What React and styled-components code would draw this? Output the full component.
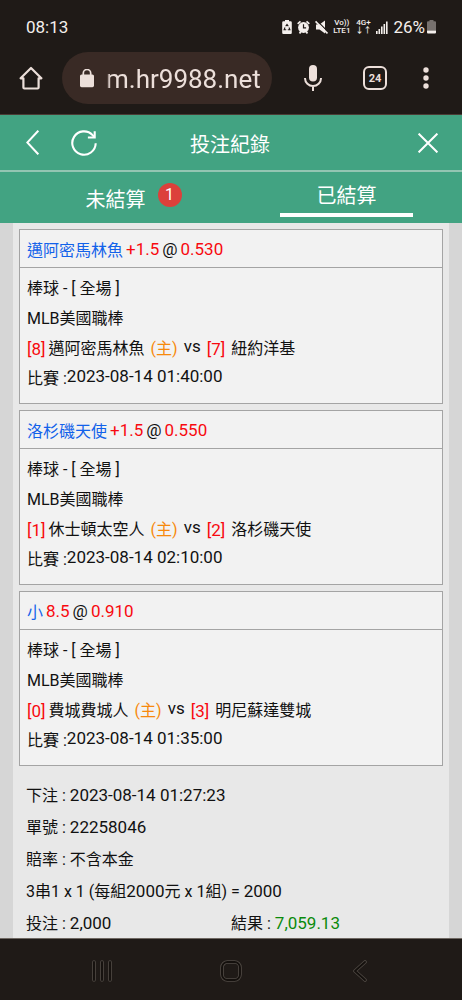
import { useState } from "react";
import styled, { createGlobalStyle } from "styled-components";

const GlobalStyle = createGlobalStyle`
  * {
    box-sizing: border-box;
  }
  body {
    margin: 0;
    font-family: Roboto, "Noto Sans CJK TC", sans-serif;
    font-size: 16px;
    color: #111;
    background: #1f1a17;
  }
  button, input {
    font-family: inherit;
    border: none;
    padding: 0;
    background: none;
    color: inherit;
  }
  button {
    cursor: pointer;
  }
  svg {
    display: block;
    flex-shrink: 0;
  }
`;

const Screen = styled.div`
  height: 100vh;
  display: flex;
  flex-direction: column;
`;

/* phone status bar */
const StatusBar = styled.div`
  height: 52px;
  padding: 2px 26px 0;
  display: flex;
  align-items: center;
  justify-content: space-between;
  color: #f4efec;
  font-size: 17px;
`;

const StatusIcons = styled.div`
  display: flex;
  align-items: center;
  gap: 5px;
`;

const NetLabel = styled.span`
  display: flex;
  flex-direction: column;
  align-items: center;
  font-size: 8px;
  line-height: 8px;
  font-weight: 500;
`;

const BatteryLevel = styled.span`
  display: flex;
  align-items: center;
  gap: 2px;
`;

/* browser bar */
const BrowserBar = styled.div`
  display: flex;
  align-items: center;
  padding: 0 6px 10px 0;
  color: #ecdfda;
  border-bottom: 1px solid #4a3c35;
`;

const BarButton = styled.button`
  width: ${(props) => props.$width}px;
  height: 52px;
  display: flex;
  align-items: center;
  justify-content: center;
`;

const AddressBox = styled.label`
  flex: 1;
  min-width: 0;
  height: 52px;
  padding: 0 8px 0 18px;
  display: flex;
  align-items: center;
  gap: 12px;
  border-radius: 26px;
  background: #392a25;
`;

const AddressInput = styled.input`
  flex: 1;
  min-width: 0;
  height: 40px;
  padding-top: 2px;
  font-size: 26px;
  outline: none;
  mask-image: linear-gradient(to right, transparent, #000 4px);
`;

const TabCount = styled.span`
  width: 24px;
  height: 24px;
  display: flex;
  align-items: center;
  justify-content: center;
  border: 2px solid #ecdfda;
  border-radius: 6px;
  font-size: 11px;
  font-weight: 700;
`;

/* app header */
const Header = styled.header`
  display: grid;
  grid-template-columns: 1fr auto 1fr;
  align-items: center;
  height: 57px;
  padding: 0 8px 0 6px;
  color: #fff;
  background: #42a382;
  border-bottom: 2px solid #93c5b2;
`;

const HeaderSide = styled.div`
  display: flex;
  justify-content: ${(props) => (props.$end ? "flex-end" : "flex-start")};
`;

const Title = styled.h1`
  margin: 0;
  padding-top: 4px;
  font-size: 20px;
  line-height: 30px;
  font-weight: 400;
`;

const Tabs = styled.nav`
  display: flex;
  background: #42a382;
`;

const Tab = styled.button`
  flex: 1;
  height: 51px;
  padding-top: ${(props) => (props.$active ? 2 : 4)}px;
  display: flex;
  flex-direction: column;
  align-items: center;
  justify-content: center;
  gap: 2px;
  color: #fff;
  font-size: 20px;
  line-height: 30px;

  &::after {
    content: "";
    display: ${(props) => (props.$active ? "block" : "none")};
    width: 58%;
    height: 4px;
    background: #fff;
  }
`;

const TabText = styled.span`
  position: relative;
`;

const Badge = styled.span`
  position: absolute;
  left: 100%;
  top: -2px;
  width: 24px;
  height: 24px;
  margin-left: 12px;
  border-radius: 50%;
  background: #dc403b;
  font-size: 16px;
  line-height: 24px;
  text-align: center;
`;

/* bet list */
const Content = styled.main`
  flex: 1;
  min-height: 0;
  overflow: hidden;
  padding: 0 13px;
  background: #d6d6d6;
`;

const Panel = styled.div`
  min-height: 100%;
  padding: 6px;
  background: #e8e8e8;
`;

const CardList = styled.div`
  display: flex;
  flex-direction: column;
  gap: 6px;
`;

const Card = styled.section`
  border: 1px solid #a4a4a4;
  background: #f2f2f2;
`;

const CardHead = styled.div`
  height: 38px;
  padding: 0 7px;
  display: flex;
  align-items: center;
  gap: 3px;
  border-bottom: 1px solid #a4a4a4;
`;

const CardBody = styled.div`
  padding: 6px 7px 9px;
`;

const Line = styled.div`
  display: flex;
  gap: ${(props) => props.$gap || 0}px;
  line-height: 30px;
  white-space: pre;
`;

const Pick = styled.span`
  color: #1262ea;
`;

const Num = styled.span`
  font-size: 17px;
  line-height: 20px;
  color: ${(props) => props.$color || "inherit"};
`;

const Seat = styled.span`
  display: flex;
  gap: ${(props) => props.$gap}px;
`;

const Red = styled.span`
  font-size: 17px;
  color: #f8090f;
`;

const HomeMark = styled.span`
  color: #f7890c;
`;

const Raised = styled.span`
  font-size: 17px;
  line-height: 24px;
`;

const Summary = styled.div`
  padding: 14px 7px 0;
`;

const SummaryRow = styled.div`
  display: grid;
  grid-template-columns: 1fr 1fr;
  height: 32px;
  line-height: 32px;
  white-space: nowrap;
`;

/* android navigation */
const NavBar = styled.nav`
  height: 62px;
  padding: 2px 38px 0;
  display: grid;
  grid-template-columns: repeat(3, 1fr);
  border-top: 1px solid #6f6862;
`;

const NavButton = styled.button`
  display: flex;
  align-items: center;
  justify-content: center;
`;

const PowerSaveIcon = () => (
  <svg width="10" height="14" viewBox="0 0 10 14">
    <path d="M3 0h4v1.3h1.6A1.2 1.2 0 0 1 9.8 2.5v10.2A1.2 1.2 0 0 1 8.6 14H1.4A1.2 1.2 0 0 1 .2 12.7V2.5A1.2 1.2 0 0 1 1.4 1.3H3z" fill="#f4efec" />
    <path d="M3.7 6.3 5 4.4l1.3 1.9M7 7.5l.9 2.3H5.8M4.2 9.8H2.1L3 7.5" fill="none" stroke="#1f1a17" strokeWidth="1.1" />
  </svg>
);

const AlarmIcon = () => (
  <svg width="13" height="14" viewBox="0 0 13 14">
    <circle cx="6.5" cy="7.5" r="5.4" fill="#f4efec" />
    <path d="M.7 3.8 3.5 1.3M12.3 3.8 9.5 1.3M2.6 13.4l1.2-1.9M10.4 13.400l-1.200-1.900" stroke="#f4efec" strokeWidth="1.8" />
    <path d="M6.5 4.3v3.5h2.6" fill="none" stroke="#1f1a17" strokeWidth="1.2" />
  </svg>
);

const MuteIcon = () => (
  <svg width="13" height="14" viewBox="0 0 13 14">
    <path d="M1 4.5h3.5L10 .6v12.800L4.500 9.500H1z" fill="#f4efec" />
    <path d="M1.6.4 13.300 12.100" stroke="#1f1a17" strokeWidth="1.3" />
    <path d="M.5 1.400 12.500 13.400" stroke="#f4efec" strokeWidth="1.700" />
  </svg>
);

const SignalIcon = () => (
  <svg width="12" height="13" viewBox="0 0 12 13" fill="#f4efec">
    <rect x="0" y="10" width="1.6" height="3" />
    <rect x="2.5" y="8" width="1.6" height="5" />
    <rect x="5" y="5.5" width="1.6" height="7.5" />
    <rect x="7.5" y="3" width="1.6" height="10" />
    <rect x="10" y="0.5" width="1.6" height="12.5" />
  </svg>
);

const BatteryIcon = () => (
  <svg width="9" height="14" viewBox="0 0 9 14">
    <path d="M2.5 0h4v1.3H8a1 1 0 0 1 1 1V10.500H0V2.300a1 1 0 0 1 1-1h1.500z" fill="#77716e" />
    <path d="M0 10.500h9v2a1 1 0 0 1-1 1H1a1 1 0 0 1-1-1z" fill="#f4efec" />
  </svg>
);

const HomeIcon = () => (
  <svg width="24" height="24" viewBox="0 0 24 24" fill="none" stroke="currentColor" strokeWidth="2.2" strokeLinejoin="round">
    <path d="M12 2 1.6 12.3h2.8V21.500a1 1 0 0 0 1 1h13.200a1 1 0 0 0 1-1v-9.200h2.800z" />
  </svg>
);

const LockIcon = () => (
  <svg width="14" height="19" viewBox="0 0 14 19">
    <rect x="0" y="5.5" width="14" height="12.7" rx="1.6" fill="currentColor" />
    <path d="M3.3 6.5V4.2a3.7 3.7 0 0 1 7.4 0v2.3" fill="none" stroke="currentColor" strokeWidth="1.7" />
  </svg>
);

const MicIcon = () => (
  <svg width="18" height="26" viewBox="0 0 18 26">
    <rect x="5" y="0" width="8" height="16.5" rx="4" fill="currentColor" />
    <path d="M1 13v.3a8 7.7 0 0 0 16 0V13M9 21v5" fill="none" stroke="currentColor" strokeWidth="2" />
  </svg>
);

const DotsIcon = () => (
  <svg width="6" height="22" viewBox="0 0 6 22" fill="currentColor">
    <circle cx="3" cy="3" r="2.7" />
    <circle cx="3" cy="11" r="2.7" />
    <circle cx="3" cy="19" r="2.7" />
  </svg>
);

const BackIcon = () => (
  <svg width="13" height="25" viewBox="0 0 13 25" fill="none" stroke="currentColor" strokeWidth="2">
    <path d="M12.3.7 1.3 12.5l11 11.8" />
  </svg>
);

const RefreshIcon = () => (
  <svg width="26" height="26" viewBox="0 0 26 26" fill="none" stroke="currentColor" strokeWidth="2.1">
    <path d="M24.700 13.300A11.700 11.700 0 1 1 21.600 5.100l1.700 1.900" />
    <path d="M23.700 1.300v6.200h-6.800" />
  </svg>
);

const CloseIcon = () => (
  <svg width="20" height="20" viewBox="0 0 20 20" stroke="currentColor" strokeWidth="2">
    <path d="M.6.6l18.800 18.800M19.400.6.6 19.400" />
  </svg>
);

// black glyph with a thin grey outline
const OutlinedPath = ({ d, width, height }) => (
  <svg width={width} height={height} viewBox={`0 0 ${width} ${height}`} fill="none" strokeLinecap="round" strokeLinejoin="round">
    <path d={d} stroke="#504a45" strokeWidth="3.6" />
    <path d={d} stroke="#14100d" strokeWidth="1.9" />
  </svg>
);

const bets = [
  {
    pick: "邁阿密馬林魚",
    line: "+1.5",
    odds: "0.530",
    home: { score: 8, name: "邁阿密馬林魚" },
    away: { score: 7, name: "紐約洋基" },
    time: "2023-08-14 01:40:00",
  },
  {
    pick: "洛杉磯天使",
    line: "+1.5",
    odds: "0.550",
    home: { score: 1, name: "休士頓太空人" },
    away: { score: 2, name: "洛杉磯天使" },
    time: "2023-08-14 02:10:00",
  },
  {
    pick: "小",
    line: "8.5",
    odds: "0.910",
    home: { score: 0, name: "費城費城人" },
    away: { score: 3, name: "明尼蘇達雙城" },
    time: "2023-08-14 01:35:00",
  },
];

const BetCard = ({ bet }) => (
  <Card>
    <CardHead>
      <Pick>{bet.pick}</Pick>
      <Num $color="#f8090f">{bet.line}</Num>
      <Num>@</Num>
      <Num $color="#f8090f">{bet.odds}</Num>
    </CardHead>
    <CardBody>
      <Line>棒球 - [ 全場 ]</Line>
      <Line>MLB美國職棒</Line>
      <Line $gap={6}>
        <Seat $gap={3}>
          <Red>[{bet.home.score}]</Red>
          <span>{bet.home.name}</span>
        </Seat>
        <HomeMark>(主)</HomeMark>
        <Raised>vs</Raised>
        <Seat $gap={6}>
          <Red>[{bet.away.score}]</Red>
          <span>{bet.away.name}</span>
        </Seat>
      </Line>
      <Line>
        <span>比賽 :</span>
        <Raised>{bet.time}</Raised>
      </Line>
    </CardBody>
  </Card>
);

const App = () => {
  const [tab, setTab] = useState("settled");

  return (
    <Screen>
      <GlobalStyle />
      <StatusBar>
        <span>08:13</span>
        <StatusIcons>
          <PowerSaveIcon />
          <AlarmIcon />
          <MuteIcon />
          <NetLabel>
            <span>Vo))</span>
            <span>LTE1</span>
          </NetLabel>
          <NetLabel>
            <span>4G+</span>
            <span>↓↑</span>
          </NetLabel>
          <SignalIcon />
          <BatteryLevel>
            <span>26%</span>
            <BatteryIcon />
          </BatteryLevel>
        </StatusIcons>
      </StatusBar>
      <BrowserBar>
        <BarButton $width={62} aria-label="Home">
          <HomeIcon />
        </BarButton>
        <AddressBox>
          <LockIcon />
          <AddressInput aria-label="Address" defaultValue="m.hr9988.net" />
        </AddressBox>
        <BarButton $width={82} aria-label="Voice search">
          <MicIcon />
        </BarButton>
        <BarButton $width={42} aria-label="Open tabs">
          <TabCount>24</TabCount>
        </BarButton>
        <BarButton $width={60} aria-label="Menu">
          <DotsIcon />
        </BarButton>
      </BrowserBar>

      <Header>
        <HeaderSide>
          <BarButton $width={52} aria-label="返回">
            <BackIcon />
          </BarButton>
          <BarButton $width={52} aria-label="重新整理">
            <RefreshIcon />
          </BarButton>
        </HeaderSide>
        <Title>投注紀錄</Title>
        <HeaderSide $end>
          <BarButton $width={52} aria-label="關閉">
            <CloseIcon />
          </BarButton>
        </HeaderSide>
      </Header>
      <Tabs>
        <Tab $active={tab === "open"} onClick={() => setTab("open")}>
          <TabText>
            未結算
            <Badge>1</Badge>
          </TabText>
        </Tab>
        <Tab $active={tab === "settled"} onClick={() => setTab("settled")}>
          <TabText>已結算</TabText>
        </Tab>
      </Tabs>

      <Content>
        <Panel>
          <CardList>
            {bets.map((bet) => (
              <BetCard key={bet.time} bet={bet} />
            ))}
          </CardList>
          <Summary>
            <SummaryRow>
              <span>下注 : <Num>2023-08-14 01:27:23</Num></span>
            </SummaryRow>
            <SummaryRow>
              <span>單號 : <Num>22258046</Num></span>
            </SummaryRow>
            <SummaryRow>
              <span>賠率 : 不含本金</span>
            </SummaryRow>
            <SummaryRow>
              <span>
                3串1 x 1 (每組<Num>2000</Num>元 x 1組) = <Num>2000</Num>
              </span>
            </SummaryRow>
            <SummaryRow>
              <span>投注 : <Num>2,000</Num></span>
              <span>結果 : <Num $color="#0b8a0b">7,059.13</Num></span>
            </SummaryRow>
          </Summary>
        </Panel>
      </Content>

      <NavBar>
        <NavButton aria-label="Recent apps">
          <OutlinedPath width={20} height={22} d="M2 2v18M10 2v18M18 2v18" />
        </NavButton>
        <NavButton aria-label="Home screen">
          <OutlinedPath width={22} height={22} d="M7.5 2h7a5.5 5.5 0 0 1 5.5 5.5v7a5.5 5.5 0 0 1-5.5 5.5h-7A5.5 5.5 0 0 1 2 14.5v-7A5.5 5.5 0 0 1 7.5 2z" />
        </NavButton>
        <NavButton aria-label="Back">
          <OutlinedPath width={14} height={22} d="M12 2 2 11l10 9" />
        </NavButton>
      </NavBar>
    </Screen>
  );
};

export default App;
